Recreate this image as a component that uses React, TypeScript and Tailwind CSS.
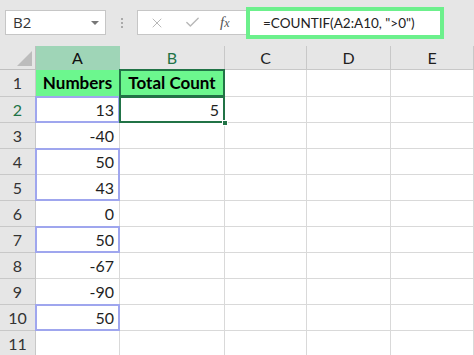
import { X, Check } from 'lucide-react'

const cols = ['A', 'B', 'C', 'D', 'E']
const colW = ['w-[84px]', 'w-[105px]', 'w-[82px]', 'w-[84px]', 'flex-1']
const rowH = ['h-[27px]', 'h-[26px]', 'h-[26px]', 'h-[26px]', 'h-[26px]', 'h-[26px]', 'h-[26px]', 'h-[26px]', 'h-[26px]', 'h-[26px]', 'h-[26px]']

// values in column A, row 2..10
const nums: Record<number, string> = { 2: '13', 3: '-40', 4: '50', 5: '43', 6: '0', 7: '50', 8: '-67', 9: '-90', 10: '50' }

// range highlight edges for cells > 0
const blue: Record<number, string> = {
  2: 'border-2',
  4: 'border-2 border-b-0',
  5: 'border-2 border-t-0',
  7: 'border-2',
  10: 'border-2',
}

function Cell({ row, col }: { row: number; col: number }) {
  const base = `${colW[col]} relative shrink-0 border-r border-b border-[#d9d9d9] flex items-center justify-end pr-[5px]`
  if (row === 1 && col < 2) {
    return (
      <div className={`${colW[col]} relative shrink-0 border-r border-b border-[#d9d9d9] bg-[#6cf78e] flex items-center justify-center font-bold text-[17px] text-black`}>
        {col === 0 ? 'Numbers' : 'Total Count'}
        {col === 1 && <div className="absolute -inset-[1px] border-2 border-[#217346]" />}
      </div>
    )
  }
  if (col === 0) {
    return (
      <div className={base}>
        <span className="relative z-10">{nums[row] ?? ''}</span>
        {blue[row] && <div className={`absolute -inset-[1px] border-[#9fa6ee] ${blue[row]}`} />}
      </div>
    )
  }
  if (row === 2 && col === 1) {
    return (
      <div className={base}>
        5
        <div className="absolute -inset-[1px] border-2 border-[#217346]" />
        <div className="absolute -right-[4px] -bottom-[4px] w-[6px] h-[6px] bg-[#217346] border border-white z-20" />
      </div>
    )
  }
  return <div className={base} />
}

export default function App() {
  return (
    <div className="w-[474px] h-[355px] overflow-hidden bg-white text-[#1f1f1f]" style={{ fontFamily: 'Lato, "Open Sans", sans-serif' }}>
      {/* formula bar */}
      <div className="h-[46px] bg-[#e6e6e6] flex items-start pt-[10px] pl-[5px]">
        <div className="w-[101px] h-[25px] bg-white border border-[#c6c6c6] flex items-center pl-[7px] pr-[6px] text-[15px] text-[#333]" style={{ fontFamily: '"Open Sans", sans-serif' }}>
          <span className="flex-1">B2</span>
          <span className="w-0 h-0 border-l-[4px] border-r-[4px] border-t-[4px] border-l-transparent border-r-transparent border-t-[#777]" />
        </div>
        <div className="w-[31px] h-[25px] flex flex-col items-center justify-center gap-[2px]">
          <span className="w-[2px] h-[2px] bg-[#aaa]" />
          <span className="w-[2px] h-[2px] bg-[#aaa]" />
          <span className="w-[2px] h-[2px] bg-[#aaa]" />
        </div>
        <div className="w-[109px] h-[25px] bg-white border border-[#c6c6c6] border-r-0 flex items-center pl-[11px] text-[#b8b8b8]">
          <X size={16} strokeWidth={1.5} />
          <Check size={17} strokeWidth={2} className="ml-[19px]" />
          <span className="ml-[19px] italic text-[15px] text-[#555]" style={{ fontFamily: '"Liberation Serif", serif' }}>
            f<span className="text-[12px]">x</span>
          </span>
        </div>
        <div className="-mt-[3px] w-[198px] h-[32px] bg-white border-[4px] border-[#6cf08c] flex items-center pl-[13px] text-[13.5px] text-[#222]">
          =COUNTIF(A2:A10, "&gt;0")
        </div>
      </div>

      {/* column headers */}
      <div className="flex h-[24px]">
        <div className="w-[36px] shrink-0 bg-[#e6e6e6] border-r border-b border-[#bfbfbf] flex items-end justify-end p-[3px]">
          <svg width="15" height="15" viewBox="0 0 15 15"><path d="M15 0 L15 15 L0 15 Z" fill="#bcbcbc" /></svg>
        </div>
        {cols.map((c, i) => (
          <div
            key={c}
            className={`${colW[i]} shrink-0 border-r border-b flex items-center justify-center text-[16px] ${i === 0 ? 'bg-[#9fd5b7] border-[#9fd5b7] text-[#111]' : 'bg-[#e6e6e6] border-[#c8c8c8]'} ${i === 1 ? 'text-[#217346]' : ''}`}
          >
            {c}
          </div>
        ))}
      </div>

      {/* rows */}
      {rowH.map((h, r) => {
        const row = r + 1
        return (
          <div key={row} className={`flex ${h}`}>
            <div className={`w-[36px] shrink-0 bg-[#e6e6e6] border-r border-b border-[#c8c8c8] flex items-center justify-center text-[16px] ${row === 2 ? 'text-[#217346]' : 'text-[#333]'}`}>
              {row}
            </div>
            {cols.map((c, i) => (
              <Cell key={c} row={row} col={i} />
            ))}
          </div>
        )
      })}
    </div>
  )
}
